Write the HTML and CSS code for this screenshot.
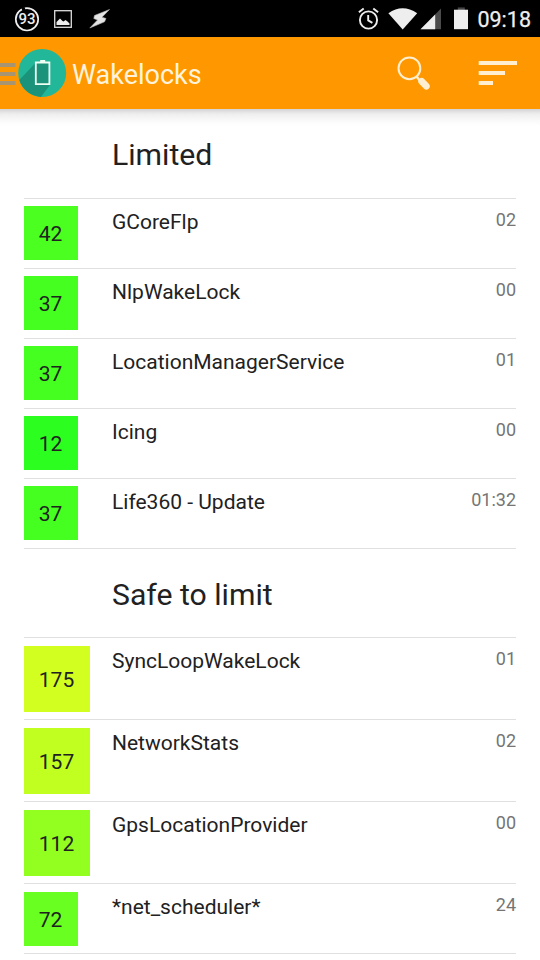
FILE: index.html
```html
<!DOCTYPE html>
<html lang="en">
<head>
<meta charset="utf-8">
<title>Wakelocks</title>
<link rel="stylesheet" href="styles.css">
</head>
<body>
<div class="status">
  <div class="status-icons">
    <svg class="badge-icon" width="26" height="26" viewBox="0 0 26 26"><circle cx="13" cy="12.3" r="11.2" fill="none" stroke="#eee" stroke-width="1.7"/><path d="M8 2.5 11 1.3" stroke="#000" stroke-width="3"/><text x="13" y="17.2" text-anchor="middle">93</text></svg>
    <svg class="image-icon" width="18" height="18" viewBox="0 0 18 18"><rect x=".7" y=".7" width="16.6" height="16.6" fill="none" stroke="#ddd" stroke-width="1.3"/><path d="M2.5 15v-3l3.5-3.5 2.5 2.5 1 .5 2-1.5 2 1.5 2 2V15z" fill="#eee"/></svg>
    <svg class="bolt-icon" width="22" height="20" viewBox="0 0 22 20"><path d="M20.5.5 5.5 6.5 4.8 9.5 8.5 11 .8 19 15.5 12.8 17 9.5 13 8.2z" fill="#e4e4e4" stroke="#bbb" stroke-width=".6"/></svg>
  </div>
  <div class="system-icons">
    <svg width="112" height="24" viewBox="0 0 112 24">
      <g fill="none" stroke="#eee" stroke-width="1.9"><circle cx="10.5" cy="13" r="8.6"/><path d="M10.2 8v5.4l4.2 2.5M.9 5.2 5.7 1.4M15.3 1.4l4.8 3.8"/></g>
      <path d="M30.4 6.2Q44.5-3.8 59.2 6.2L44.7 22.5z" fill="#eee"/>
      <path d="M62.5 22.2 83 1.5v20.7z" fill="#4b4b4b"/><path d="M62.5 22.2 77.2 7.5v14.7z" fill="#eee"/>
      <path d="M99.8.4h7V3h-7z" fill="#444"/><path d="M96 2.7h14v19.5H96z" fill="#eee"/>
    </svg>
    <span class="clock">09:18</span>
  </div>
</div>
<header class="appbar">
  <svg class="logo" width="67" height="50" viewBox="0 0 67 50">
    <path d="M0 16h15.5M0 25h15.5M0 34h15.5" stroke="#a69472" stroke-width="4"/>
    <circle cx="42.2" cy="24" r="24" fill="#21b798"/>
    <path d="M19.3 31a24 24 0 0 0 21.5 16.9L50 36V14L36 13.5z" fill="#1a937a"/>
    <path d="M35.8 13.5h13.6v21.6H35.8z" fill="none" stroke="#f0fff4" stroke-width="1.8"/><path d="M40.2 11h5v2.8h-5z" fill="#f0fff4"/>
  </svg>
  <h1>Wakelocks</h1>
  <svg class="actions" width="122" height="36" viewBox="0 0 122 36">
    <circle cx="13.4" cy="13.3" r="10.9" fill="none" stroke="#ffefd0" stroke-width="2"/>
    <path d="m20.5 21.5 3.3 4" stroke="#ffefd0" stroke-width="2.4"/><path d="m25.7 26.4 4.6 4.8" stroke="#ffefd0" stroke-width="6.8" stroke-linecap="round"/>
    <path d="M82.7 8H121M82.7 18H109M82.7 28H97" stroke="#ffefd0" stroke-width="4"/>
  </svg>
</header>
<main>
  <h2>Limited</h2>
  <ul class="limited">
    <li><span class="count c42">42</span><span class="name">GCoreFlp</span><time>02</time></li>
    <li><span class="count c37">37</span><span class="name">NlpWakeLock</span><time>00</time></li>
    <li><span class="count c37">37</span><span class="name">LocationManagerService</span><time>01</time></li>
    <li><span class="count c12">12</span><span class="name">Icing</span><time>00</time></li>
    <li><span class="count c37">37</span><span class="name">Life360 - Update</span><time>01:32</time></li>
  </ul>
  <h2 class="safe-title">Safe to limit</h2>
  <ul class="safe">
    <li><span class="count wide c175">175</span><span class="name">SyncLoopWakeLock</span><time>01</time></li>
    <li><span class="count wide c157">157</span><span class="name">NetworkStats</span><time>02</time></li>
    <li><span class="count wide c112">112</span><span class="name">GpsLocationProvider</span><time>00</time></li>
    <li><span class="count c72">72</span><span class="name">*net_scheduler*</span><time>24</time></li>
  </ul>
</main>
</body>
</html>
```
FILE: styles.css
```css
* { box-sizing: border-box; }
body { margin: 0; height: 960px; overflow: hidden; background: #fff; color: #212121; font-family: Roboto, sans-serif; }
svg { display: block; flex: none; }
.status { height: 37px; background: #000; display: flex; justify-content: space-between; padding: 7px 9px 0 14px; }
.status-icons { display: flex; }
.badge-icon text { font: 500 15px Roboto, sans-serif; fill: #eee; }
.image-icon { margin: 3px 0 0 14px; }
.bolt-icon { margin: 2px 0 0 17px; }
.system-icons { display: flex; width: 173px; justify-content: space-between; }
.clock { font-size: 21.5px; line-height: 26px; font-weight: 400; color: #eee; -webkit-text-stroke: .25px #eee; }
.appbar { height: 72px; background: #ff9800; display: flex; align-items: flex-start; padding-right: 22px; }
.logo { margin-top: 12px; }
h1 { margin: 0 auto 0 5px; font-size: 27px; font-weight: 400; line-height: 76px; color: #fff3dc; }
.actions { margin-top: 18px; }
main { padding: 0 24px; background: linear-gradient(#d4d4d4, #eee 5px, #fafafa 12px, #fff 17px) no-repeat 0 0 / 100% 17px; }
h2 { margin: 0; height: 90px; padding: 1px 0 0 88px; line-height: 90px; font-size: 30.2px; font-weight: 400; border-bottom: 1px solid #e0e0e0; }
.safe-title { height: 89px; }
ul { list-style: none; margin: 0; padding: 0; }
li { display: grid; grid-template-columns: 88px 1fr auto; align-items: start; border-bottom: 1px solid #e0e0e0; padding: 7px 0 8px; }
.safe li { padding: 8px 0 7px; }
.count { width: 54px; height: 54px; line-height: 56px; padding-left: 14.8px; font-size: 21px; }
.wide { width: 66px; height: 66px; line-height: 68px; }
.name { font-size: 21px; line-height: 25px; padding-top: 4px; }
time { font-size: 18px; line-height: 22px; padding-top: 3px; color: #757575; }
.safe .name { padding-top: 3px; }
.safe time { padding-top: 2px; }
.c42 { background: #4bff20; }
.c37 { background: #45ff20; }
.c12 { background: #2cff20; }
.c175 { background: #d3ff20; }
.c157 { background: #c0ff20; }
.c112 { background: #93ff20; }
.c72 { background: #69ff20; }
```
